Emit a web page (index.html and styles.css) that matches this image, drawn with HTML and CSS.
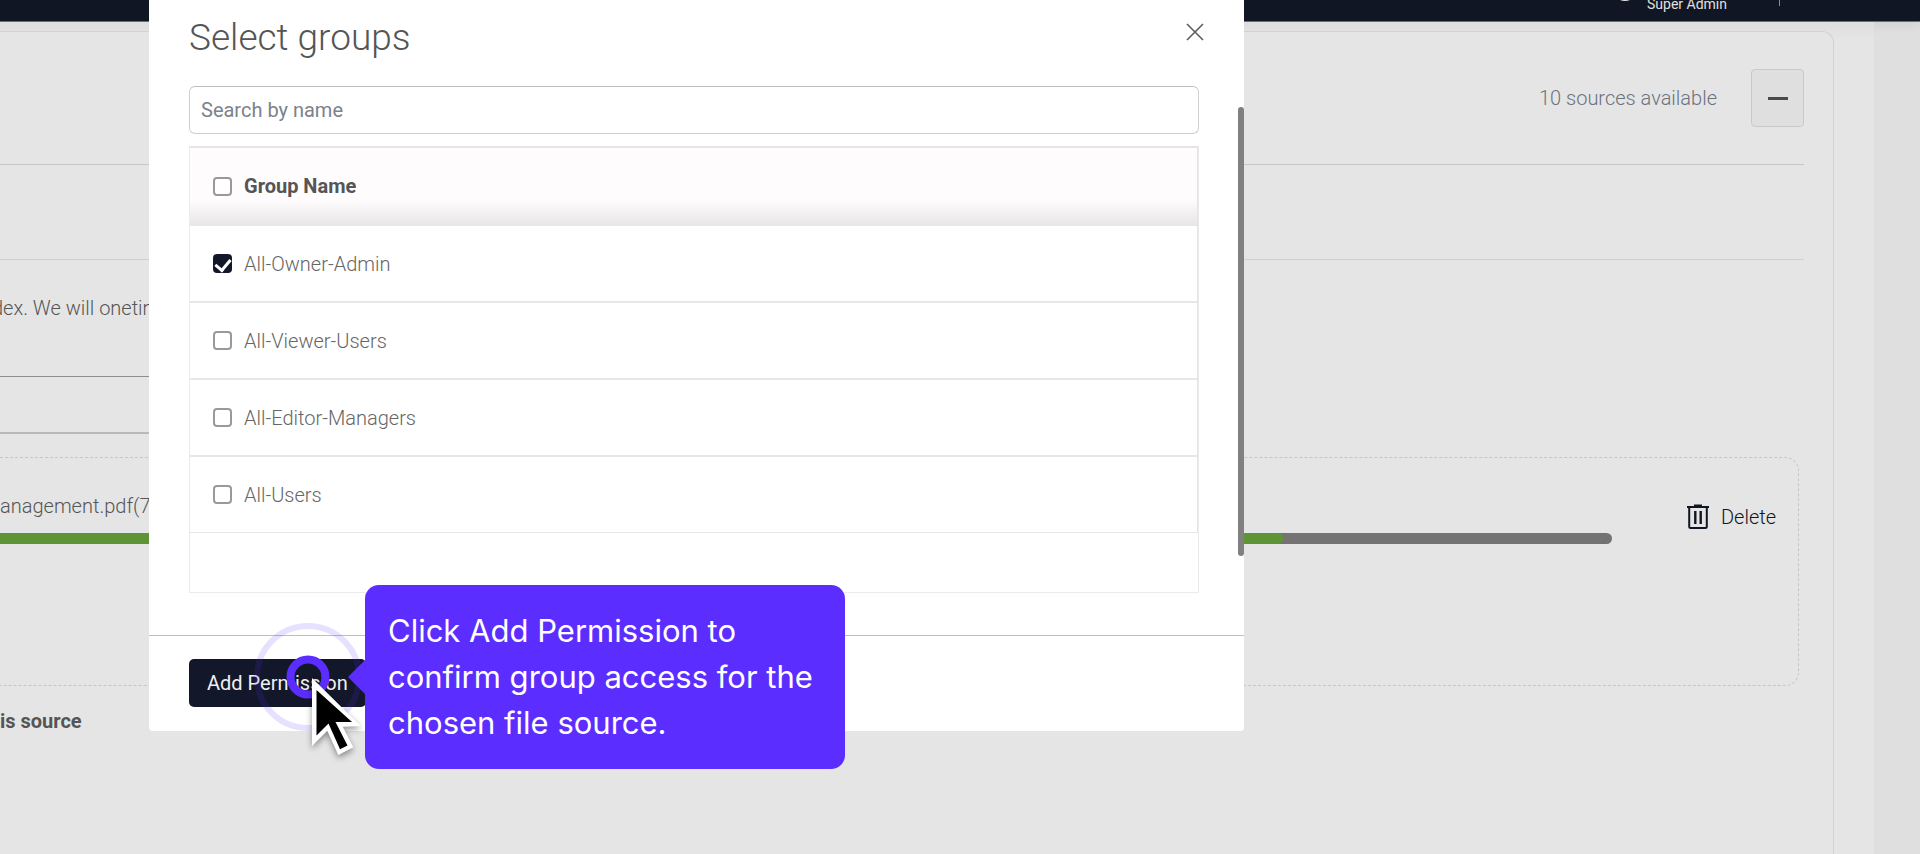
FILE: index.html
```html
<!DOCTYPE html>
<html lang="en">
<head>
    <meta charset="UTF-8">
    <meta name="viewport" content="width=device-width, initial-scale=1.0">
    <title>Select groups</title>
    <link rel="stylesheet" href="styles.css">
</head>
<body>
    <header class="topbar">
        <span class="avatar"></span>
        <span class="role">Super Admin</span>
        <span class="divider"></span>
    </header>

    <main class="content">
        <section class="card">
            <div class="card-head">
                <span class="count">10 sources available</span>
                <button class="collapse-btn" type="button" aria-label="Collapse"><span class="minus"></span></button>
            </div>
            <div class="card-row"></div>
            <p class="hint">dex. We will onetim</p>
            <div class="field"></div>
            <div class="file-box">
                <div class="file-info">
                    <div class="file-name">anagement.pdf(7</div>
                    <div class="progress"><div class="progress-fill" style="width: 79.6%"></div></div>
                </div>
                <button class="delete-btn" type="button">
                    <svg width="22" height="26" viewBox="0 0 22 26" fill="none" stroke="#101623">
                        <path d="M0 3h22M7 1.5h8" stroke-width="2"/>
                        <path d="M2.2 3v19.500a1.500 1.500 0 0 0 1.500 1.500h14.600a1.500 1.500 0 0 0 1.500-1.500V3" stroke-width="2"/>
                        <path d="M8.300 7v13M13.700 7v13" stroke-width="2.400"/>
                    </svg>
                    Delete
                </button>
            </div>
            <p class="source-label">is source</p>
        </section>
    </main>

    <div class="overlay">
        <div class="modal" role="dialog" aria-labelledby="modalTitle">
            <div class="modal-body">
                <div class="modal-head">
                    <h2 id="modalTitle">Select groups</h2>
                    <button class="close-btn" type="button" aria-label="Close">
                        <svg width="18" height="18" viewBox="0 0 18 18" stroke="#5c5c5c" stroke-width="1.600">
                            <path d="M1 1l16 16M17 1L1 17"/>
                        </svg>
                    </button>
                </div>
                <input class="search" type="text" placeholder="Search by name" aria-label="Search by name">
                <div class="table-wrap">
                    <table class="groups">
                        <thead>
                            <tr><th><label><input type="checkbox">Group Name</label></th></tr>
                        </thead>
                        <tbody>
                            <tr><td><label><input type="checkbox" checked>All-Owner-Admin</label></td></tr>
                            <tr><td><label><input type="checkbox">All-Viewer-Users</label></td></tr>
                            <tr><td><label><input type="checkbox">All-Editor-Managers</label></td></tr>
                            <tr><td><label><input type="checkbox">All-Users</label></td></tr>
                        </tbody>
                    </table>
                </div>
            </div>
            <div class="modal-foot">
                <button class="primary-btn" type="button">Add Permission</button>
            </div>
            <span class="scroll-thumb"></span>

            <!-- guided tour step -->
            <svg class="pulse" width="110" height="110" viewBox="0 0 110 110" fill="none" stroke="#5b2eff">
                <circle cx="55" cy="55" r="51" stroke-width="6" opacity="0.150"/>
                <circle cx="55" cy="55" r="17.500" stroke-width="8"/>
            </svg>
            <svg class="cursor" width="70" height="90" viewBox="0 0 70 90">
                <path fill="#fff" d="M10 8v68l15.300-15.300L36.300 85l15-7.700-10.600-20.600 18-.7z"/>
                <path fill="#000" d="M14.500 20v45.500l12-12L38 79.300l7.500-3.800-12-23.500h16.500z"/>
            </svg>
            <div class="tour-tip">Click Add Permission to confirm group access for the chosen file source.</div>
        </div>
    </div>
</body>
</html>
```

FILE: styles.css
```css
* {
    box-sizing: border-box;
}
body {
    margin: 0;
    min-height: 100vh;
    display: flex;
    flex-direction: column;
    overflow: hidden;
    background: #dfdfdf;
    color: #555;
    font-family: Roboto, sans-serif;
    font-size: 20px;
    font-weight: 300;
    line-height: 24px;
}
button, input {
    font: inherit;
}
p, h2 {
    margin: 0;
}

/* page behind the dialog */
.topbar {
    display: flex;
    justify-content: flex-end;
    align-items: flex-end;
    height: 22px;
    padding-right: 140px;
    background: #101623;
    border-bottom: 1px solid #6b6e75;
    box-shadow: 0 2px 12px rgba(0, 0, 0, 0.08);
    overflow: hidden;
    flex: none;
}
.avatar {
    width: 24px;
    height: 24px;
    margin: 0 10px 20px 0;
    border-radius: 50%;
    background: #e5e5e5;
}
.role {
    margin-right: 52px;
    padding-bottom: 8px;
    color: #e0e0e0;
    font-size: 14px;
    font-weight: 400;
    line-height: 18px;
}
.divider {
    width: 1px;
    height: 20px;
    margin-bottom: 15px;
    background: #8a8d94;
}
.content {
    flex: 1;
    display: flex;
    margin-right: 46px;
    padding: 9px 40px 0 0;
    background: linear-gradient(#dedede, #e5e5e5 18px);
}
.card {
    flex: 1;
    padding-right: 29px;
    border: 1px solid #d2d2d3;
    border-width: 1px 1px 0 0;
    border-top-right-radius: 12px;
    background: #e5e5e5;
}
.card-head {
    display: flex;
    justify-content: flex-end;
    align-items: center;
    gap: 34px;
    height: 133px;
    border-bottom: 1px solid #c6c6c8;
}
.count {
    color: #6b7280;
}
.collapse-btn {
    display: flex;
    align-items: center;
    justify-content: center;
    width: 53px;
    height: 58px;
    padding: 0;
    border: 1px solid #c9c9ca;
    border-radius: 4px;
    background: #dfdfdf;
}
.minus {
    width: 20px;
    height: 3px;
    background: #4a4a4a;
}
.card-row {
    height: 95px;
    border-bottom: 1px solid #cfcfd2;
}
.hint {
    margin: 36px 0 56px -8px;
}
.field {
    height: 58px;
    width: 50%;
    border-top: 1px solid #8d8f8d;
    border-bottom: 2px solid #b9b9b9;
}
.file-box {
    display: flex;
    align-items: flex-start;
    height: 229px;
    margin: 23px 5px 0 0;
    padding: 36px 22px 0 0;
    border: 1px dashed #c6c6c6;
    border-left: 0;
    border-radius: 0 14px 14px 0;
}
.file-info {
    flex: 1;
    margin-right: 75px;
}
.progress {
    height: 11px;
    margin-top: 15px;
    border-radius: 0 6px 6px 0;
    background: #737373;
}
.progress-fill {
    height: 100%;
    border-radius: 0 6px 6px 0;
    background: #5e9436;
}
.delete-btn {
    display: flex;
    align-items: center;
    gap: 12px;
    margin-top: 10px;
    padding: 0;
    border: 0;
    background: none;
    color: #101623;
}
.source-label {
    margin-top: 23px;
    font-weight: 700;
}

/* dialog */
.overlay {
    position: absolute;
    inset: 0;
    padding-left: 149px;
}
.modal {
    position: relative;
    width: 100%;
    max-width: 1095px;
    background: #fff;
    border-radius: 0 0 4px 4px;
}
.modal-body {
    padding: 16px 45px 42px 40px;
}
.modal-head {
    display: flex;
    justify-content: space-between;
    margin-right: -5px;
}
.modal-head h2 {
    font-size: 37px;
    font-weight: 300;
    line-height: 44px;
}
.close-btn {
    height: 18px;
    margin-top: 7px;
    padding: 0;
    border: 0;
    background: none;
}
.close-btn svg, .delete-btn svg {
    display: block;
}
.search {
    display: block;
    width: 100%;
    height: 48px;
    margin: 26px 0 12px;
    padding: 0 11px;
    border: 1px solid #cfcfcf;
    border-top-color: #bdbdbd;
    border-radius: 6px;
    font-weight: 400;
}
.search::placeholder {
    color: #7b828c;
}
.table-wrap {
    padding-bottom: 59px;
    border: 1px solid #ebebeb;
    border-top: 0;
}
.groups {
    width: 100%;
    border-spacing: 0;
    border-right: 1px solid #e4e4e4;
}
.groups th, .groups td {
    height: 77px;
    padding: 0 23px;
    border-bottom: 2px solid #e7e7e7;
    text-align: left;
}
.groups th {
    height: 80px;
    border-top: 2px solid #e5e5e5;
    background: linear-gradient(#fffcfd 68%, #e9e7e8);
    font-weight: 700;
}
.groups tr:last-child td {
    height: 76px;
    border-bottom-width: 1px;
}
.groups label {
    display: flex;
    align-items: center;
    gap: 12px;
}
.groups td label {
    color: #666;
}
.groups input {
    appearance: none;
    width: 19px;
    height: 19px;
    margin: 0;
    border: 2px solid #999;
    border-radius: 4px;
    background: #fff;
}
.groups input:checked {
    display: flex;
    justify-content: center;
    border-color: #12172a;
    background: #12172a;
}
.groups input:checked::before {
    content: "";
    width: 7px;
    height: 12px;
    border: solid #fff;
    border-width: 0 3px 3px 0;
    transform: rotate(40deg);
}
.modal-foot {
    padding: 23px 40px 24px;
    border-top: 1px solid #bebebe;
}
.primary-btn {
    display: block;
    height: 48px;
    padding: 0 18px;
    border: 0;
    border-radius: 5px;
    background: #12172a;
    color: #f0f0f0;
    font-weight: 400;
}
.scroll-thumb {
    position: absolute;
    top: 107px;
    right: 0;
    width: 6px;
    height: 449px;
    border-radius: 3px;
    background: #808080;
}

/* tour */
.pulse {
    position: absolute;
    top: 622px;
    left: 104px;
}
.cursor {
    position: absolute;
    top: 670px;
    left: 153px;
    filter: drop-shadow(0 3px 3px rgba(0, 0, 0, 0.4));
}
.tour-tip {
    position: absolute;
    top: 585px;
    left: 216px;
    width: 480px;
    padding: 23px;
    border-radius: 14px;
    background: #5b2eff;
    color: #fff;
    font-family: Inter, sans-serif;
    font-size: 31px;
    font-weight: 400;
    line-height: 46px;
}
.tour-tip::before {
    content: "";
    position: absolute;
    top: 75px;
    left: -17px;
    border: solid transparent;
    border-width: 17px 17px 17px 0;
    border-right-color: #5b2eff;
}
```
